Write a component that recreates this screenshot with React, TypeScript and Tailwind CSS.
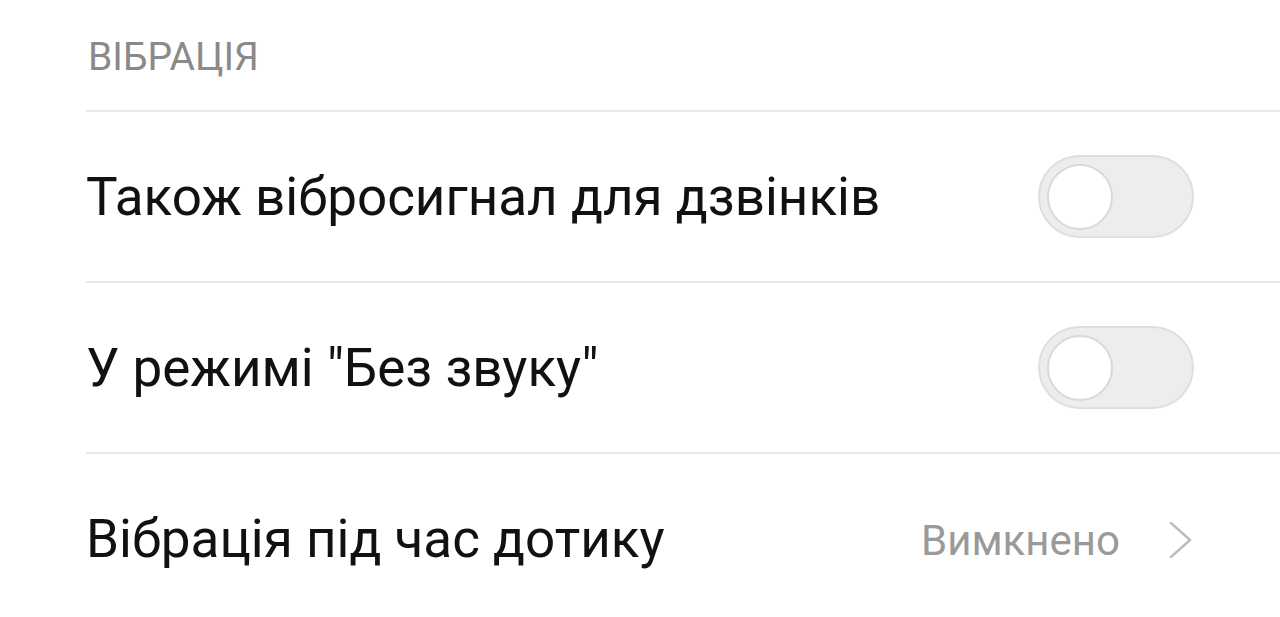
import React from 'react';

const Toggle: React.FC = () => (
  <div className="flex h-[83px] w-[156px] items-center rounded-full border-2 border-[#dedede] bg-[#ededed] pl-[7px]">
    <div className="h-[66px] w-[66px] rounded-full border-2 border-[#d9d9d9] bg-white" />
  </div>
);

const Row: React.FC<{ label: string; children: React.ReactNode }> = ({ label, children }) => (
  <div className="flex h-[171px] items-center justify-between border-t-2 border-[#e8e8e8] pr-[86px]">
    <span className="pt-[2px] text-[53px] text-[#111111]">{label}</span>
    {children}
  </div>
);

export default function App() {
  return (
    <div className="h-[617px] w-[1280px] overflow-hidden bg-white pl-[86px]" style={{ fontFamily: 'Roboto, "Noto Sans", sans-serif' }}>
      <div className="flex h-[110px] items-center pt-[4px]">
        <span className="pl-[2px] text-[39px] text-[#8a8a8a]">ВІБРАЦІЯ</span>
      </div>
      <Row label="Також вібросигнал для дзвінків">
        <Toggle />
      </Row>
      <Row label='У режимі "Без звуку"'>
        <Toggle />
      </Row>
      <Row label="Вібрація під час дотику">
        <div className="flex items-center gap-[48px] pt-[3px]">
          <span className="text-[42px] text-[#9a9a9a]">Вимкнено</span>
          <svg width="26" height="40" viewBox="0 0 26 40" fill="none">
            <path d="M3 3 L22 20 L3 37" stroke="#bdbdbd" strokeWidth="2.5" strokeLinecap="round" strokeLinejoin="round" />
          </svg>
        </div>
      </Row>
    </div>
  );
}
